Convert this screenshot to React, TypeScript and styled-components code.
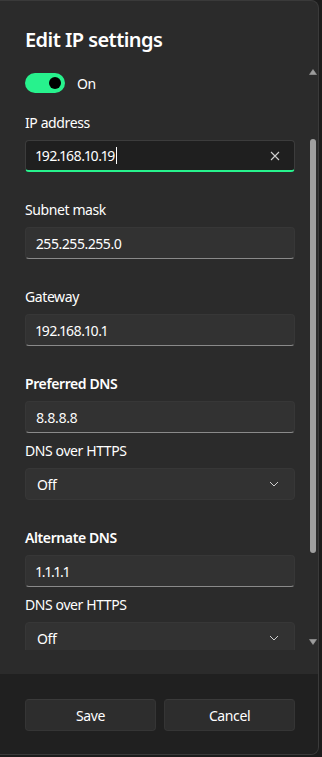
import * as React from "react";
import styled, { createGlobalStyle } from "styled-components";

const ACCENT = "#27f28d";

const GlobalStyle = createGlobalStyle`
  html, body {
    margin: 0;
    padding: 0;
    background: #1c1c1c;
  }
  body {
    font-family: "Segoe UI", "Noto Sans", "Open Sans", sans-serif;
    font-variant-numeric: proportional-nums;
    letter-spacing: -0.4px;
    -webkit-font-smoothing: antialiased;
  }
  * {
    box-sizing: border-box;
  }
`;

const Page = styled.div`
  width: 322px;
  height: 757px;
  display: flex;
  align-items: flex-start;
  overflow: hidden;
  background: #1c1c1c;
`;

const Dialog = styled.div`
  width: 319px;
  height: 755px;
  display: flex;
  flex-direction: column;
  background: #2b2b2b;
  border: 1px solid #3a3a3a;
  border-left: none;
  border-radius: 0 8px 8px 0;
  overflow: hidden;
  color: #ffffff;
`;

const Body = styled.div`
  display: flex;
  flex-direction: column;
  padding: 25px 0 24px 0;
`;

const Title = styled.div`
  padding-left: 25px;
  font-size: 20px;
  font-weight: 600;
  line-height: 28px;
  letter-spacing: -0.55px;
  margin-bottom: 12px;
`;

const ScrollRow = styled.div`
  display: flex;
  height: 584px;
`;

const Content = styled.div`
  flex: 1;
  overflow: hidden;
  padding: 7px 13px 0 25px;
  display: flex;
  flex-direction: column;
`;

const ScrollTrack = styled.div`
  width: 10px;
  display: flex;
  flex-direction: column;
  align-items: center;
  padding: 3px 0 5px;
`;

const Thumb = styled.div`
  width: 6px;
  height: 414px;
  margin-top: 64px;
  border-radius: 3px;
  background: #9f9f9f;
`;

const TrackSpacer = styled.div`
  flex: 1;
`;

const ToggleRow = styled.div`
  display: flex;
  align-items: center;
  gap: 12px;
  height: 20px;
  margin-bottom: 20px;
  font-size: 14px;
`;

const Switch = styled.div`
  width: 40px;
  height: 20px;
  border-radius: 10px;
  background: ${ACCENT};
  display: flex;
  align-items: center;
  justify-content: flex-end;
  padding-right: 4px;
`;

const Knob = styled.div`
  width: 12px;
  height: 12px;
  border-radius: 50%;
  background: #000000;
`;

const Group = styled.div`
  display: flex;
  flex-direction: column;
  margin-bottom: 28px;
`;

const Label = styled.div<{ $strong?: boolean; $sub?: boolean }>`
  font-size: 14px;
  line-height: 20px;
  font-weight: ${(p) => (p.$strong ? 600 : 400)};
  margin-top: ${(p) => (p.$sub ? "8px" : "0")};
  margin-bottom: 7px;
`;

const TextBox = styled.div<{ $focused?: boolean }>`
  height: 32px;
  display: flex;
  align-items: center;
  padding: 0 14px 0 10px;
  border-radius: 4px;
  font-size: 14px;
  background: ${(p) => (p.$focused ? "#1f1f1f" : "#323232")};
  border: 1px solid ${(p) => (p.$focused ? "#3c3c3c" : "#373737")};
  border-bottom: ${(p) =>
    p.$focused ? `2px solid ${ACCENT}` : "1px solid #8a8a8a"};
`;

const Value = styled.span`
  flex: 1;
  display: flex;
  align-items: center;
`;

const Caret = styled.span`
  width: 1px;
  height: 17px;
  background: #ffffff;
  margin-left: 1px;
`;

const ComboBox = styled.div`
  height: 32px;
  display: flex;
  align-items: center;
  justify-content: space-between;
  padding: 0 15px 0 11px;
  border-radius: 4px;
  font-size: 14px;
  background: #323232;
  border: 1px solid #373737;
`;

const Footer = styled.div`
  flex: 1;
  background: #202020;
  padding: 25px 23px 0 25px;
  display: grid;
  grid-template-columns: 1fr 1fr;
  gap: 8px;
  align-content: start;
`;

const Button = styled.div`
  height: 32px;
  display: flex;
  align-items: center;
  justify-content: center;
  border-radius: 4px;
  background: #2d2d2d;
  border: 1px solid #353535;
  border-top-color: #3a3a3a;
  font-size: 14px;
`;

const ClearIcon = () => (
  <svg width="10" height="10" viewBox="0 0 10 10">
    <path d="M1 1 L9 9 M9 1 L1 9" stroke="#cfcfcf" strokeWidth="1.1" fill="none" />
  </svg>
);

const Chevron = () => (
  <svg width="10" height="10" viewBox="0 0 10 10">
    <path d="M1 3 L5 7 L9 3" stroke="#cfcfcf" strokeWidth="1" fill="none" />
  </svg>
);

const Arrow = ({ down }: { down?: boolean }) => (
  <svg width="8" height="6" viewBox="0 0 8 6">
    <path
      d={down ? "M0.5 0.5 L7.5 0.5 L4 5.5 Z" : "M4 0.5 L7.5 5.5 L0.5 5.5 Z"}
      fill="#9d9d9d"
      stroke="#9d9d9d"
      strokeWidth="0.6"
      strokeLinejoin="round"
    />
  </svg>
);

export default function App() {
  return (
    <>
      <GlobalStyle />
      <Page>
        <Dialog>
          <Body>
            <Title>Edit IP settings</Title>
            <ScrollRow>
              <Content>
                <ToggleRow>
                  <Switch>
                    <Knob />
                  </Switch>
                  On
                </ToggleRow>

                <Group>
                  <Label>IP address</Label>
                  <TextBox $focused>
                    <Value>
                      192.168.10.19
                      <Caret />
                    </Value>
                    <ClearIcon />
                  </TextBox>
                </Group>

                <Group>
                  <Label>Subnet mask</Label>
                  <TextBox>255.255.255.0</TextBox>
                </Group>

                <Group>
                  <Label>Gateway</Label>
                  <TextBox>192.168.10.1</TextBox>
                </Group>

                <Group>
                  <Label $strong>Preferred DNS</Label>
                  <TextBox>8.8.8.8</TextBox>
                  <Label $sub>DNS over HTTPS</Label>
                  <ComboBox>
                    Off
                    <Chevron />
                  </ComboBox>
                </Group>

                <Group>
                  <Label $strong>Alternate DNS</Label>
                  <TextBox>1.1.1.1</TextBox>
                  <Label $sub>DNS over HTTPS</Label>
                  <ComboBox>
                    Off
                    <Chevron />
                  </ComboBox>
                </Group>
              </Content>
              <ScrollTrack>
                <Arrow />
                <Thumb />
                <TrackSpacer />
                <Arrow down />
              </ScrollTrack>
            </ScrollRow>
          </Body>
          <Footer>
            <Button>Save</Button>
            <Button>Cancel</Button>
          </Footer>
        </Dialog>
      </Page>
    </>
  );
}
